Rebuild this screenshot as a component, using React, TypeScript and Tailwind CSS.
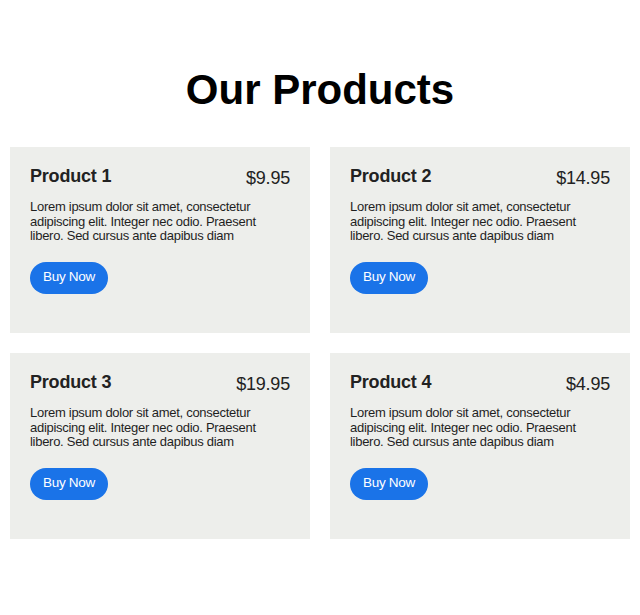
import React from "react";

const products = [
  { name: "Product 1", price: "$9.95" },
  { name: "Product 2", price: "$14.95" },
  { name: "Product 3", price: "$19.95" },
  { name: "Product 4", price: "$4.95" },
];

export default function App() {
  return (
    <div className="bg-white px-[10px] pt-[68px]" style={{ fontFamily: '"Liberation Sans", Arial, sans-serif' }}>
      <h1 className="text-center text-[42px] font-bold leading-[44px] text-black">Our Products</h1>
      <div className="mt-[35px] grid grid-cols-2 gap-[20px]">
        {products.map((p) => (
          <div key={p.name} className="h-[186px] bg-[#edeeeb] px-[20px] pt-[18px]">
            <div className="flex items-start justify-between">
              <h3 className="text-[18px] font-bold leading-[22px] tracking-[-0.2px] text-[#222]">{p.name}</h3>
              <span className="mt-[2px] text-[18px] leading-[22px] tracking-[-0.2px] text-[#222]">{p.price}</span>
            </div>
            <p className="mt-[11px] text-[13px] leading-[14.5px] tracking-[-0.28px] text-[#1f1f1f]">
              Lorem ipsum dolor sit amet, consectetur adipiscing elit. Integer nec odio. Praesent libero. Sed cursus ante dapibus diam
            </p>
            <button className="mt-[18px] h-[32px] rounded-full bg-[#1a73e8] px-[13px] text-[13.5px] tracking-[-0.3px] text-white">Buy Now</button>
          </div>
        ))}
      </div>
    </div>
  );
}
